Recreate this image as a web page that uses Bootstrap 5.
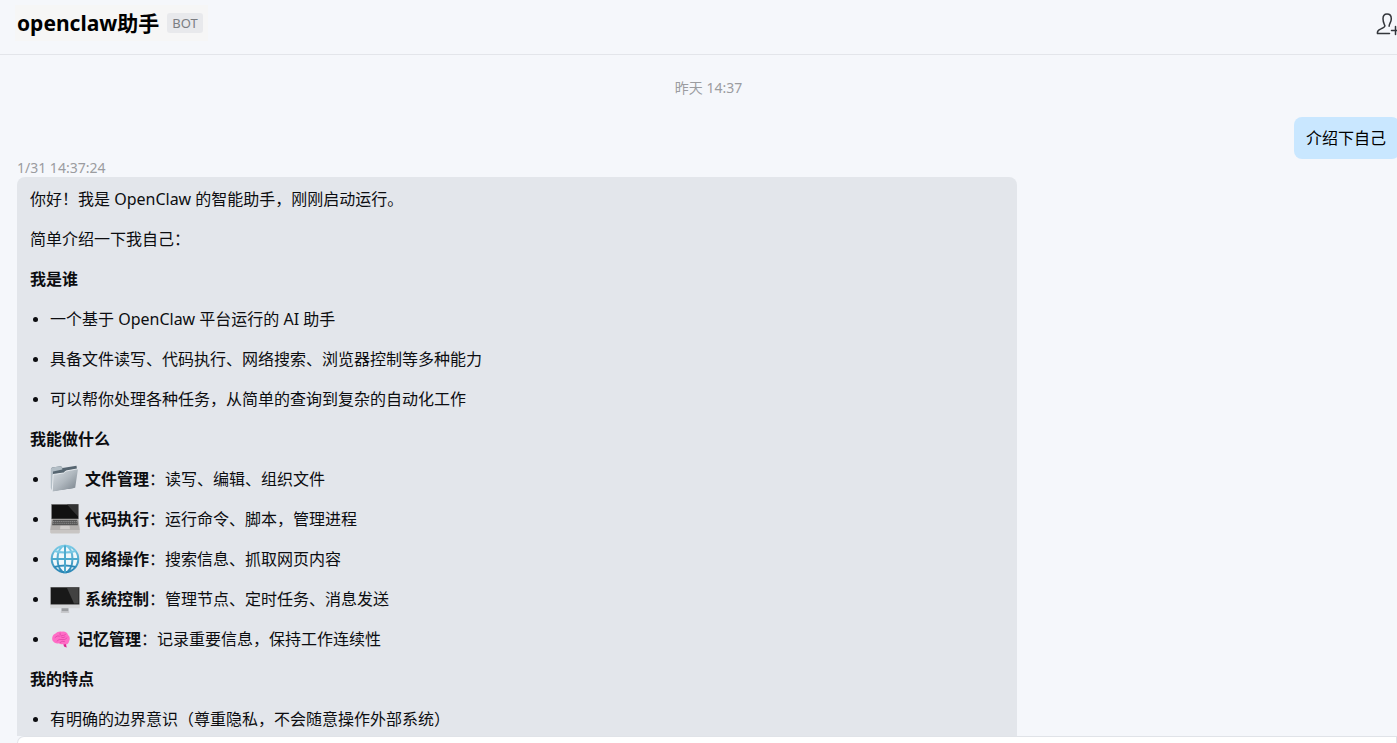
<!DOCTYPE html>
<html lang="zh-CN">
<head>
<meta charset="utf-8">
<meta name="viewport" content="width=device-width, initial-scale=1">
<title>openclaw助手</title>
<link href="https://cdn.jsdelivr.net/npm/bootstrap@5.3.0/dist/css/bootstrap.min.css" rel="stylesheet">
<style>
  body { font-family: "Noto Sans", "Noto Sans CJK SC", sans-serif; font-size: 16px; line-height: 24px; color: #0c0d10; background: #f5f7fb; }
  /* the chat pane runs slightly past the right edge of the window */
  .pane { width: calc(100% + 20px); padding: 0 17px; }
  .chat-head { height: 55px; border-bottom: 1px solid #e3e5ea; }
  .chat-name { font-size: 21px; line-height: 36px; font-weight: 700; color: #000; }
  .name-box { background: #f6f6f6; margin: 5px 0 0 -2px; padding: 0 5px 0 2px; height: 36px; }
  .bot-tag { font-size: 13px; line-height: 20px; color: #7b7d82; background: #e8e9ec; border-radius: 3px; padding: 0 5px; }
  .add-btn { width: 26px; height: 26px; margin: 10px -2px 0 0; }
  .stamp { font-size: 14px; line-height: 18px; color: #9b9ca0; }
  .day-stamp { margin-top: 24px; }
  .mine { margin-top: 20px; padding: 9px 14px 9px 12px; background: #c9e7ff; border-radius: 8px; color: #000; }
  .reply { max-width: 1000px; padding: 10px 13px; background: #e3e6eb; border-radius: 8px; }
  .reply p, .reply li { margin-bottom: 16px; }
  .reply li { display: flex; align-items: center; height: 24px; }
  .reply li::before { content: ""; flex: none; width: 5px; height: 5px; margin: 0 12px 0 3px; border-radius: 50%; background: #0c0d10; }
  .pic { flex: none; width: 30px; height: 30px; margin: -3px 5px -3px 0; }
  .pic-s { flex: none; width: 20px; height: 20px; margin-left: 1px; margin-right: 6px; }
  .composer { height: 7px; background: #fff; border: 1px solid #e0e3e8; border-bottom: 0; border-radius: 8px 0 0 0; margin-left: 17px; }
</style>
</head>
<body class="vh-100 d-flex flex-column overflow-hidden">
<header class="chat-head pane flex-shrink-0 d-flex align-items-start justify-content-between">
  <div class="name-box d-flex align-items-center">
    <h1 class="chat-name mb-0 me-2">openclaw助手</h1>
    <span class="bot-tag">BOT</span>
  </div>
  <button type="button" class="add-btn btn p-0 border-0 d-flex" aria-label="添加成员">
    <svg width="26" height="26" viewBox="0 0 26 26" fill="none" stroke="#33363b" stroke-width="1.5" stroke-linecap="round" stroke-linejoin="round">
      <path d="M13.500 23.500H1.500c-.5-2.200.7-3.400 3-4.400 2.600-1 4.400-1.700 4.400-3.300C8.400 14.200 7 12.500 7 8.800 7 5.800 8.500 4 11 4s4.300 1.900 4.300 4.700c0 3.500-2.200 5-2.200 7.500"/>
      <path d="M15.500 20.500h8M19.500 16.500v8"/>
    </svg>
  </button>
</header>

<main class="pane flex-fill overflow-hidden">
  <div class="stamp day-stamp text-center">昨天 14:37</div>
  <div class="d-flex justify-content-end"><div class="mine">介绍下自己</div></div>
  <div class="stamp">1/31 14:37:24</div>
  <article class="reply">
    <p>你好！我是 OpenClaw 的智能助手，刚刚启动运行。</p>
    <p>简单介绍一下我自己：</p>
    <p class="fw-bold">我是谁</p>
    <ul class="list-unstyled mb-0">
      <li>一个基于 OpenClaw 平台运行的 AI 助手</li>
      <li>具备文件读写、代码执行、网络搜索、浏览器控制等多种能力</li>
      <li>可以帮你处理各种任务，从简单的查询到复杂的自动化工作</li>
    </ul>
    <p class="fw-bold">我能做什么</p>
    <ul class="list-unstyled mb-0">
      <li>
        <svg class="pic" viewBox="0 0 30 30" aria-hidden="true">
          <defs><linearGradient id="fold" x1="0" y1="0" x2="1" y2="1"><stop offset="0" stop-color="#d9dfe4"/><stop offset=".5" stop-color="#b0b8bf"/><stop offset="1" stop-color="#747e87"/></linearGradient></defs>
          <path d="M1 5 2 3.500l9-1.200 1.500 1.700L26.500 1.800l.5 4L24 24 2 27z" fill="#566570"/>
          <path d="M.8 5 2 3.500l9-1.200 1.300 1.700v1.500L3 7.500 2.500 27 .8 24z" fill="#b3bec6"/>
          <path d="M3 10.500 13.500 9l2.500-2 12-2.200-2.800 19L2.300 27.500z" fill="url(#fold)"/>
          <path d="M2.300 27.500 3 10.500 13.500 9l2.500-2 12-2.200" fill="none" stroke="#eef2f5" stroke-width=".9"/>
        </svg><span><b>文件管理</b>：读写、编辑、组织文件</span></li>
      <li>
        <svg class="pic" viewBox="0 0 30 30" aria-hidden="true">
          <path d="M1.500.3h27V15h-27z" fill="#111" stroke="#8a8a8a" stroke-width=".6"/>
          <path d="M17 .6h11v12z" fill="#333"/>
          <path d="M1.500 15h27l1.300 11H.2z" fill="#b3b0ae"/>
          <path d="M2.800 15.800h24.400l.7 5.400H2.100z" fill="#555"/>
          <path d="M3 17.500h24M2.700 19.300h24.600" stroke="#aaa" stroke-width=".6" stroke-dasharray="1.300 .6"/>
          <path d="M10.500 21.800h9l.5 3.400H10z" fill="#cfccca"/>
          <path d="M.2 26h29.600v2.600q0 .8-1 .8H1.200q-1 0-1-.8z" fill="#c8c5c3"/>
        </svg><span><b>代码执行</b>：运行命令、脚本，管理进程</span></li>
      <li>
        <svg class="pic" viewBox="0 0 30 30" aria-hidden="true">
          <defs><linearGradient id="glb" x1="0" y1="0" x2="0" y2="1"><stop offset="0" stop-color="#7ccbe6"/><stop offset="1" stop-color="#2a86b5"/></linearGradient></defs>
          <circle cx="15" cy="15" r="13.500" fill="#f0f8fb"/>
          <g fill="none" stroke="url(#glb)" stroke-width="2">
            <circle cx="15" cy="15" r="13.300"/>
            <ellipse cx="15" cy="15" rx="7.500" ry="13.300"/>
            <path d="M4.500 7q10.500 3 21 0M4.500 23q10.500-3 21 0"/>
          </g>
          <path d="M14 1.500h2v27h-2zM1.500 14h27v2h-27z" fill="#4daacd"/>
        </svg><span><b>网络操作</b>：搜索信息、抓取网页内容</span></li>
      <li>
        <svg class="pic" viewBox="0 0 30 30" aria-hidden="true">
          <path d="M.3 3h29.400v18H.3z" fill="#8d8d8f"/>
          <path d="M.9 3.500h28.200v17.300H.9z" fill="#191919"/>
          <path d="M17 4h11.600v15.500H24z" fill="#424242"/>
          <path d="M.1 20.500h29.800v3.700H.1z" fill="#d6d7d9"/>
          <path d="M11.500 24.200h7v3.500h-7z" fill="#9b9da0"/>
          <path d="M10.800 27.300h8.400V29h-8.400z" fill="#c8c9cc"/>
        </svg><span><b>系统控制</b>：管理节点、定时任务、消息发送</span></li>
      <li>
        <svg class="pic-s" viewBox="0 0 20 20" aria-hidden="true">
          <path d="M1.500 11.500C.5 8.500 2 5.500 4.500 4.500 6 2.500 9 2 11 2.700c3-.5 5.500 1 6 3.300 2 1.500 2.300 4.500 1 6.500-.3 2-1.800 3-3 3l.5 3-2.500-1.200-.8-2.300c-1.700.7-3.200.3-4.200-.7-2.500.7-5-.3-6.500-2.800z" fill="#ff6dc6"/>
          <path d="M4 8.500q2-2.500 4.500-1.500M9 4q-1 2 1.500 2.500t4-1M6 12q2-2.500 5-1.500t5-1.500M10 8q2 1.500 4 0M9 13.500q2-2 4.500-1" fill="none" stroke="#e246a8" stroke-width=".8" stroke-linecap="round"/>
          <path d="m12.500 15.500 2.500-.3.500 3.300-2.300-1z" fill="#d7268f"/>
        </svg><span><b>记忆管理</b>：记录重要信息，保持工作连续性</span></li>
    </ul>
    <p class="fw-bold">我的特点</p>
    <ul class="list-unstyled mb-0">
      <li>有明确的边界意识（尊重隐私，不会随意操作外部系统）</li>
    </ul>
  </article>
</main>
<footer class="composer flex-shrink-0"></footer>
<script src="https://cdn.jsdelivr.net/npm/bootstrap@5.3.0/dist/js/bootstrap.bundle.min.js"></script>
</body>
</html>
